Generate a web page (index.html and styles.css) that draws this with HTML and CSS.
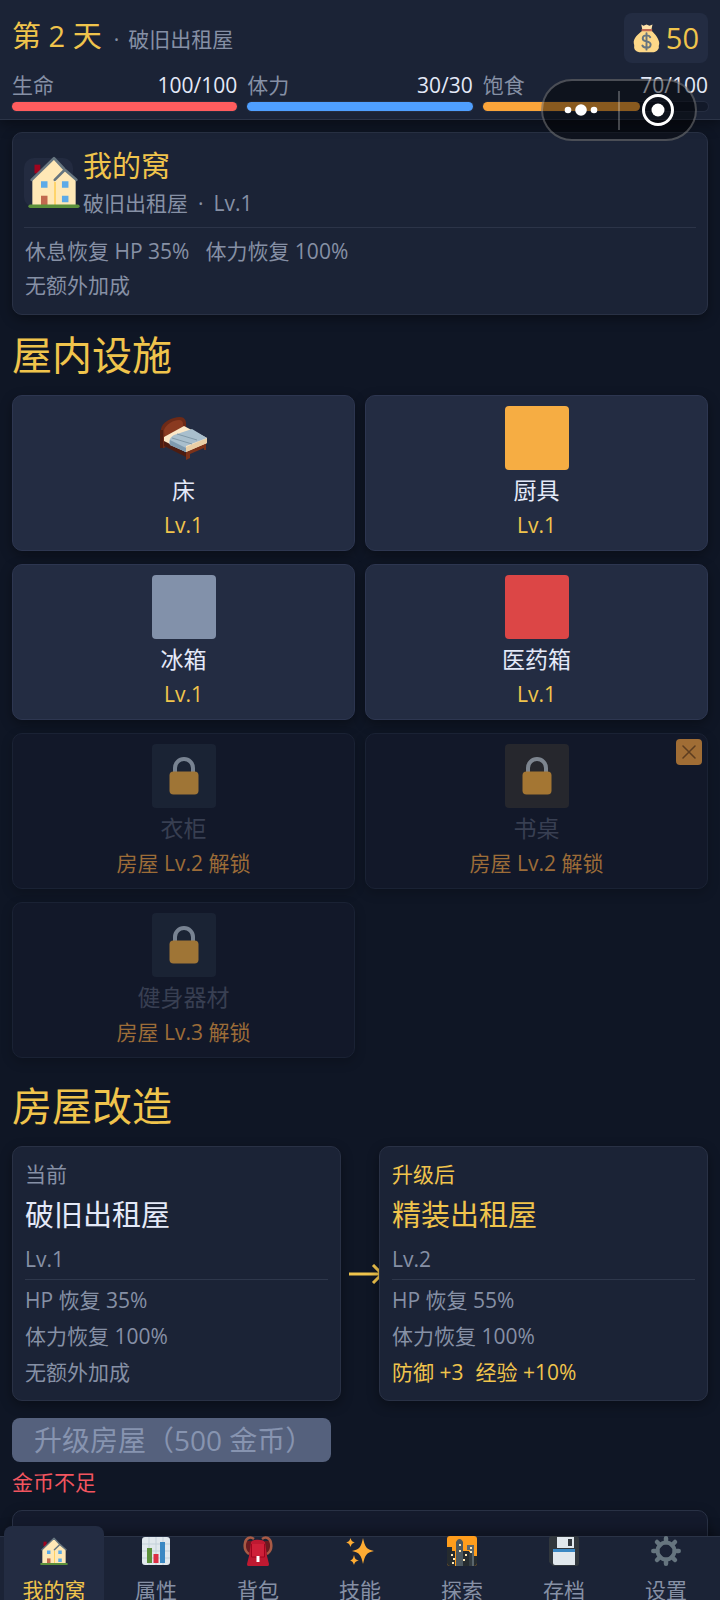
FILE: index.html
```html
<!DOCTYPE html>
<html lang="zh-CN">
  <head>
    <meta charset="UTF-8" />
    <meta name="viewport" content="width=device-width, initial-scale=1.0" />
    <title>我的窝</title>
    <link rel="stylesheet" href="styles.css">
  </head>
  <body>
    <!-- Shared icons -->
    <svg class="icon-defs" width="0" height="0" aria-hidden="true">
      <symbol id="icon-house" viewBox="0 0 36 36">
        <path fill="#a0041e" d="M4.5 6h4v6h-4z"/>
        <path fill="#ffe8b6" d="M3 16 18 1.500 25 9l8 7.500V35H3z"/>
        <path fill="#ffcc4d" d="M18.200 18h1v17h-1z"/>
        <path fill="none" stroke="#66757f" stroke-width="1.800" stroke-linecap="round" stroke-linejoin="round" d="M2.500 16.500 18 1.500l7 7.500M18.500 16.500 25.500 9.500 33.500 16.500"/>
        <path fill="#5caae8" d="M9 17.500h4.500V22H9zM23.500 17.500H28V22h-4.500zM23.500 27.500H28V32h-4.500z"/>
        <path fill="#c1694f" d="M9 27.500h4.500V35H9z"/>
        <path fill="#5c913b" d="M1.500 33.500h33a1.200 1.200 0 0 1 0 2.500h-33a1.200 1.200 0 0 1 0-2.500z"/>
      </symbol>
      <symbol id="icon-lock" viewBox="0 0 30 38">
        <path fill="none" stroke="#bdc9d6" stroke-width="4" d="M6 17v-6a9 9 0 0 1 18 0v6"/>
        <rect x="0.500" y="14.500" width="29" height="23" rx="4" fill="#ffb038"/>
      </symbol>
    </svg>

    <div class="app">
      <header class="topbar">
        <div class="topbar-row">
          <div class="day">
            <span>第 2 天</span>
            <span class="day-place"><span>·</span><span>破旧出租屋</span></span>
          </div>
          <div class="coins">
            <svg class="coins-icon" viewBox="0 0 36 40" aria-hidden="true">
              <path fill="#ffe2a8" d="m11 2 3 1.500L18 2l4 1.500L26 2l-1.500 7h-12z"/>
              <path fill="#fdd888" d="M13 10h11c6 4.500 11 12 11 17 0 2-1 3-.5 5.500C34 36 30 39 26 39H10c-5 0-8-3-8.500-6C1.500 31 2 30 1 27 0 21 7 14 13 10z"/>
              <path fill="#bf6952" d="M11.500 8h14v3h-14z"/>
              <path fill="none" stroke="#67757f" stroke-width="2.600" stroke-linecap="round" d="M23 19c-1-2-3-2.500-5-2.500-3 0-5 1.500-5 4s2.500 3.500 5 4 5.500 1.500 5.500 4.200-2.500 4.300-5.500 4.300c-2.500 0-4.500-1-5.500-3M18 13.500v22"/>
            </svg>
            <span>50</span>
          </div>
        </div>
        <div class="stats">
          <div class="stat">
            <div class="stat-head"><span>生命</span><span class="stat-value">100/100</span></div>
            <div class="bar"><div class="bar-fill hp" style="width: 100%"></div></div>
          </div>
          <div class="stat">
            <div class="stat-head"><span>体力</span><span class="stat-value">30/30</span></div>
            <div class="bar"><div class="bar-fill stamina" style="width: 100%"></div></div>
          </div>
          <div class="stat">
            <div class="stat-head"><span>饱食</span><span class="stat-value">70/100</span></div>
            <div class="bar"><div class="bar-fill food" style="width: 70%"></div></div>
          </div>
        </div>
      </header>

      <!-- Floating host menu -->
      <div class="capsule">
        <button class="capsule-button" aria-label="更多">
          <svg width="34" height="14" viewBox="0 0 34 14"><g fill="#fff"><circle cx="4" cy="7" r="3.300"/><circle cx="17" cy="7" r="5.800"/><circle cx="30" cy="7" r="3.300"/></g></svg>
        </button>
        <button class="capsule-button" aria-label="关闭">
          <svg width="34" height="34" viewBox="0 0 34 34"><circle cx="17" cy="17" r="14.500" fill="none" stroke="#fff" stroke-width="3"/><circle cx="17" cy="17" r="6.500" fill="#fff"/></svg>
        </button>
      </div>

      <main class="content">
        <section class="card home-card">
          <div class="home-head">
            <div class="home-icon"><svg width="52" height="52" aria-hidden="true"><use href="#icon-house"/></svg></div>
            <div>
              <div class="home-title">我的窝</div>
              <div class="home-sub"><span>破旧出租屋</span><span>·</span><span>Lv.1</span></div>
            </div>
          </div>
          <div class="home-info">
            <div class="info-row"><span>休息恢复 HP 35%</span><span>体力恢复 100%</span></div>
            <div>无额外加成</div>
          </div>
        </section>

        <h2>屋内设施</h2>
        <div class="facility-grid">
          <button class="facility">
            <span class="facility-icon">
              <svg width="48" height="44" viewBox="0 0 48 44" aria-hidden="true">
                <path fill="#6d2a17" d="M1 13C2 6 12 1 20 1c4 0 6 3 6 6v12L4 32H1z"/>
                <path fill="#8a3a20" d="M4 14C6 8 14 4 19 4c3 0 4 2 4 4v9L5 24z"/>
                <path fill="#4d1c10" d="M0 14h3v18H0zM4 24l22 13v4l-22-11z"/>
                <path fill="#7c3219" d="m26 36 20-10v8h-2v-2l-14 6v4l-4 2z"/>
                <path fill="#fbe8c8" d="m4 21 20-11 23 12v5L26 36 4 25z"/>
                <path fill="#e9cfa6" d="m26 31 21-9v5L26 36z"/>
                <path fill="#a9bfcd" d="M14 19 32 13l15 9-21 8v6L10 29c-2-3 0-8 4-10z"/>
                <path fill="#7f9aae" d="m10 24 16 8v4L10 29z"/>
                <path fill="none" stroke="#8199a8" d="m12 22 20 6M17 18l20 6"/>
              </svg>
            </span>
            <span class="facility-name">床</span>
            <span class="facility-level">Lv.1</span>
          </button>
          <button class="facility">
            <span class="facility-icon kitchen"></span>
            <span class="facility-name">厨具</span>
            <span class="facility-level">Lv.1</span>
          </button>
          <button class="facility">
            <span class="facility-icon fridge"></span>
            <span class="facility-name">冰箱</span>
            <span class="facility-level">Lv.1</span>
          </button>
          <button class="facility">
            <span class="facility-icon medkit"></span>
            <span class="facility-name">医药箱</span>
            <span class="facility-level">Lv.1</span>
          </button>
          <button class="facility locked">
            <span class="facility-icon wardrobe"><svg width="30" height="38" aria-hidden="true"><use href="#icon-lock"/></svg></span>
            <span class="facility-name">衣柜</span>
            <span class="facility-level">房屋 Lv.2 解锁</span>
          </button>
          <button class="facility locked">
            <span class="facility-badge">
              <svg width="14" height="14" viewBox="0 0 14 14" aria-hidden="true"><path d="m1 1 12 12M13 1 1 13" stroke="#5d3d20" stroke-width="1.500" stroke-linecap="round"/></svg>
            </span>
            <span class="facility-icon desk"><svg width="30" height="38" aria-hidden="true"><use href="#icon-lock"/></svg></span>
            <span class="facility-name">书桌</span>
            <span class="facility-level">房屋 Lv.2 解锁</span>
          </button>
          <button class="facility locked">
            <span class="facility-icon wardrobe"><svg width="30" height="38" aria-hidden="true"><use href="#icon-lock"/></svg></span>
            <span class="facility-name">健身器材</span>
            <span class="facility-level">房屋 Lv.3 解锁</span>
          </button>
        </div>

        <h2>房屋改造</h2>
        <div class="upgrade">
          <div class="card upgrade-card">
            <div class="upgrade-label">当前</div>
            <div class="upgrade-name">破旧出租屋</div>
            <div class="upgrade-level">Lv.1</div>
            <div class="upgrade-info">HP 恢复 35%</div>
            <div class="upgrade-info">体力恢复 100%</div>
            <div class="upgrade-info">无额外加成</div>
          </div>
          <div class="upgrade-arrow">
            <svg width="36" height="20" viewBox="0 0 36 20" aria-hidden="true"><path d="M0 10h32M24 1l9 9-9 9" fill="none" stroke="#f0c44c" stroke-width="3"/></svg>
          </div>
          <div class="card upgrade-card next">
            <div class="upgrade-label">升级后</div>
            <div class="upgrade-name">精装出租屋</div>
            <div class="upgrade-level">Lv.2</div>
            <div class="upgrade-info">HP 恢复 55%</div>
            <div class="upgrade-info">体力恢复 100%</div>
            <div class="upgrade-info bonus"><span>防御 +3</span><span>经验 +10%</span></div>
          </div>
        </div>
        <button class="upgrade-button" disabled>升级房屋（500 金币）</button>
        <p class="error">金币不足</p>
        <section class="card log-card"></section>
      </main>

      <nav class="tabs">
        <button class="tab active">
          <svg width="28" height="28" aria-hidden="true"><use href="#icon-house"/></svg>
          <span>我的窝</span>
        </button>
        <button class="tab">
          <svg width="28" height="28" viewBox="0 0 28 28" aria-hidden="true">
            <rect width="28" height="28" rx="3" fill="#e1e8ed"/>
            <path stroke="#c3d0d9" fill="none" d="M0 7h28M0 14h28M0 21h28M7 0v28M14 0v28M21 0v28"/>
            <path fill="#5c913b" d="M5 11h5v15H5z"/><path fill="#dd2e44" d="M11.500 17h5v9h-5z"/><path fill="#3b88c3" d="M18 5h5v21h-5z"/>
          </svg>
          <span>属性</span>
        </button>
        <button class="tab">
          <svg width="30" height="30" viewBox="0 0 30 30" aria-hidden="true">
            <path fill="#6b1a20" d="M2 5h6v14H5C2 15 1 10 2 5zM22 5h6c1 5 0 10-3 14h-3z"/>
            <path fill="none" stroke="#a85a45" stroke-width="2.500" d="M11 3C7 0 3 2 2 7c-1 5 1 9 4 11M19 3c4-3 8-1 9 4 1 5-1 9-4 11"/>
            <path fill="#be1931" d="M8 6c2-3 12-3 14 0l2 14 2 8c0 2-1 2-2 2H6c-1 0-2 0-2-2l2-8z"/>
            <path fill="#cf2039" d="M9 8h12v13H9z"/><path fill="none" stroke="#a0041e" d="M8.500 8v13h13V8"/>
            <path fill="#fff" d="M13.500 20h3v6h-3z"/>
          </svg>
          <span>背包</span>
        </button>
        <button class="tab">
          <svg width="28" height="28" viewBox="0 0 28 28" aria-hidden="true">
            <path fill="#ffac33" d="M17 1c2 9 3 11 11 13-8 2-9 4-11 13-2-9-3-11-11-13 8-2 9-4 11-13zM4.500 1C5.500 4 6 4.500 9 5.500 6 6.500 5.500 7 4.500 10 3.500 7 3 6.500 0 5.500 3 4.500 3.500 4 4.500 1zM8 18c1 4 1.500 4.500 5 5.500-3.500 1-4 1.500-5 4.500-1-3-1.500-3.500-4-4.500 2.500-1 3-1.500 4-5.500z"/>
          </svg>
          <span>技能</span>
        </button>
        <button class="tab">
          <svg width="30" height="30" viewBox="0 0 30 30" aria-hidden="true">
            <rect width="30" height="30" rx="3" fill="#ff9d1c"/>
            <path fill="#252b2f" d="M0 11h5v4h3v15H3a3 3 0 0 1-3-3zM15 15h7v15h-7zM26 20h4v7a3 3 0 0 1-3 3z"/>
            <path fill="#4c585f" d="M9 6c1-2 2-3 3.500-3S15 4 16 6v24H9z"/><path fill="#59656c" d="M20 9h7v21h-4V14h-3z"/>
            <path fill="#333c42" d="M22 16h3v14h-3z"/>
            <path fill="#ffe8b6" d="M4 18h2v2H4zM6 22h2v2H6zM5 26h2v2H5zM12 8h2v2h-2zM12 14h2v2h-2zM18 18h2v2h-2zM16 23h2v2h-2zM23 11h2v2h-2zM23 15h2v2h-2z"/>
          </svg>
          <span>探索</span>
        </button>
        <button class="tab">
          <svg width="30" height="30" viewBox="0 0 30 30" aria-hidden="true">
            <path fill="#31373d" d="M3 0h24a3 3 0 0 1 3 3v24a3 3 0 0 1-3 3H4l-4-4V3a3 3 0 0 1 3-3z"/>
            <path fill="#e1e8ed" d="M8 1h17v11H8z"/><path fill="#31373d" d="M19 3h4v7h-4z"/>
            <path fill="#e1e8ed" d="M4 13h22v16H6a2 2 0 0 1-2-2z"/><path fill="#3b88c3" d="M4 13h22v3H4z"/>
          </svg>
          <span>存档</span>
        </button>
        <button class="tab">
          <svg width="30" height="30" viewBox="0 0 30 30" aria-hidden="true">
            <g stroke="#66757f" stroke-width="4.500" stroke-linecap="round"><path d="M15 2.300v4M15 23.700v4M2.300 15h4M23.700 15h4M6 6l3 3M21 21l3 3M24 6l-3 3M9 21l-3 3"/></g>
            <circle cx="15" cy="15" r="8.500" fill="none" stroke="#66757f" stroke-width="4"/>
          </svg>
          <span>设置</span>
        </button>
      </nav>
    </div>
  </body>
</html>
```
FILE: styles.css
```css
* {
  box-sizing: border-box;
}
body {
  margin: 0;
  background-color: #0f1625;
  color: #e4e9f8;
  font-family: "Open Sans", "Noto Sans CJK SC", sans-serif;
  font-size: 21px;
  overflow: hidden;
}
button {
  font: inherit;
  color: inherit;
  border: none;
  background: none;
  padding: 0;
  cursor: pointer;
}
svg {
  display: block;
}
.icon-defs {
  position: absolute;
}
.app {
  position: relative;
  display: flex;
  flex-direction: column;
  height: 100vh;
}

/* Top bar */
.topbar {
  position: relative;
  z-index: 1;
  padding: 12px 12px 8px;
  background-color: #1b2336;
  border-bottom: 1px solid #2c3447;
  box-shadow: 0 4px 12px rgba(0, 0, 0, 0.4);
}
.topbar-row {
  display: flex;
  justify-content: space-between;
  align-items: center;
}
.day {
  display: flex;
  align-items: baseline;
  gap: 12px;
  color: #f0c44c;
  font-size: 29px;
  line-height: 48px;
}
.day-place {
  display: flex;
  gap: 9px;
  color: #8690a5;
  font-size: 21px;
}
.coins {
  display: flex;
  align-items: center;
  gap: 6px;
  height: 50px;
  padding: 0 9px;
  border-radius: 8px;
  background-color: #232c42;
  color: #f0c44c;
  font-size: 29px;
}
.coins-icon {
  width: 27px;
  height: 30px;
}
.stats {
  display: flex;
  gap: 10px;
  margin-top: 7px;
}
.stat {
  flex: 1;
}
.stat-head {
  display: flex;
  justify-content: space-between;
  margin-bottom: 2px;
  line-height: 30px;
  color: #8690a5;
}
.stat-value {
  color: #e4e9f8;
}
.bar {
  height: 9px;
  border-radius: 5px;
  background-color: #121929;
  box-shadow: 0 0 0 1px #252d40;
}
.bar-fill {
  height: 100%;
  border-radius: 5px;
}
.hp {
  background-color: #ff5c5e;
}
.stamina {
  background-color: #4f9fff;
}
.food {
  background-color: #faa43a;
}

/* Floating capsule */
.capsule {
  position: absolute;
  top: 79px;
  right: 23px;
  z-index: 10;
  display: flex;
  align-items: center;
  width: 156px;
  height: 62px;
  border: 2px solid rgba(255, 255, 255, 0.25);
  border-radius: 31px;
  background-color: rgba(0, 0, 0, 0.45);
}
.capsule-button {
  display: flex;
  flex: 1;
  justify-content: center;
  align-items: center;
  height: 39px;
}
.capsule-button + .capsule-button {
  border-left: 2px solid rgba(255, 255, 255, 0.25);
}

/* Content */
.content {
  flex: 1;
  min-height: 0;
  overflow: hidden;
  padding: 12px;
}
.card {
  padding: 12px;
  border: 1px solid #293145;
  border-radius: 10px;
  background-color: #1b2336;
  box-shadow: 0 4px 12px rgba(0, 0, 0, 0.35);
}
.home-card {
  padding: 12px 11px;
}
.home-head {
  display: flex;
  align-items: center;
  gap: 10px;
  padding-bottom: 8px;
  border-bottom: 1px solid #2c3448;
}
.home-icon {
  display: flex;
  align-items: center;
  width: 49px;
  height: 49px;
  border-radius: 10px;
  background-color: #232b40;
}
.home-icon svg {
  flex: none;
  margin-left: 4px;
}
.home-title {
  color: #f0c44c;
  font-size: 29px;
  line-height: 42px;
}
.home-sub {
  display: flex;
  gap: 10px;
  line-height: 32px;
  color: #8690a5;
}
.home-info {
  padding: 6px 1px 0;
  line-height: 34px;
  color: #8690a5;
}
.info-row {
  display: flex;
  gap: 16px;
}
h2 {
  margin: 12px 0;
  color: #f0c44c;
  font-size: 40px;
  font-weight: 400;
  line-height: 56px;
}
.facility-grid {
  display: grid;
  grid-template-columns: 1fr 1fr;
  gap: 13px 10px;
  margin-bottom: 20px;
}
.facility {
  position: relative;
  display: flex;
  flex-direction: column;
  align-items: center;
  padding: 10px 10px 9px;
  border: 1px solid #2d3650;
  border-radius: 10px;
  background-color: #232c42;
  box-shadow: 0 4px 12px rgba(0, 0, 0, 0.35);
}
.facility-icon {
  display: flex;
  justify-content: center;
  align-items: center;
  width: 64px;
  height: 64px;
  border-radius: 4px;
}
.kitchen {
  background-color: #f6ad43;
}
.fridge {
  background-color: #8291aa;
}
.medkit {
  background-color: #dc4646;
}
.facility-name {
  font-size: 23px;
  line-height: 40px;
}
.facility-level {
  line-height: 31px;
  color: #f0c44c;
}
.locked {
  border-color: #1a2234;
  background-color: #121829;
  box-shadow: 0 4px 12px rgba(0, 0, 0, 0.2);
}
.locked .facility-icon svg {
  opacity: 0.58;
}
.wardrobe {
  background-color: #1a2334;
}
.desk {
  background-color: #26272d;
}
.locked .facility-name {
  color: #383f52;
}
.locked .facility-level {
  color: #9c6c38;
}
.facility-badge {
  position: absolute;
  top: 5px;
  right: 5px;
  display: flex;
  justify-content: center;
  align-items: center;
  width: 26px;
  height: 26px;
  border-radius: 4px;
  background-color: #a06d35;
}

/* House upgrade */
.upgrade {
  display: flex;
  align-items: stretch;
}
.upgrade-card {
  flex: 1;
  padding: 10px 12px;
}
.upgrade-arrow {
  display: flex;
  align-items: center;
  width: 38px;
  padding-left: 8px;
}
.upgrade-arrow svg {
  flex: none;
}
.next {
  position: relative;
}
.upgrade-label {
  line-height: 34px;
  color: #8690a5;
}
.upgrade-name {
  font-size: 29px;
  line-height: 48px;
}
.upgrade-level {
  margin-bottom: 2px;
  line-height: 40px;
  border-bottom: 1px solid #2e374b;
  color: #8690a5;
}
.upgrade-info {
  line-height: 36px;
  color: #8690a5;
}
.next .upgrade-label,
.next .upgrade-name,
.bonus {
  color: #f0c44c;
}
.bonus {
  display: flex;
  gap: 12px;
}
.upgrade-button {
  height: 44px;
  margin-top: 17px;
  padding: 0 18px 0 22px;
  border-radius: 8px;
  background-color: #55617d;
  color: #8794b0;
  font-size: 28px;
  line-height: 44px;
}
.error {
  margin: 4px 0 12px;
  line-height: 32px;
  color: #f2555f;
}
.log-card {
  height: 120px;
  background-color: #141a2c;
}

/* Bottom tabs */
.tabs {
  position: relative;
  z-index: 1;
  display: flex;
  flex: none;
  align-items: center;
  gap: 2px;
  height: 64px;
  padding: 0 4px;
  border-top: 1px solid #2a3346;
  background-color: #1b2336;
  box-shadow: 0 -4px 12px rgba(0, 0, 0, 0.35);
}
.tab {
  display: flex;
  flex: 1;
  flex-direction: column;
  justify-content: center;
  align-items: center;
  gap: 8px;
  height: 86px;
  padding-top: 4px;
  border-radius: 8px;
  color: #8690a5;
}
.tab svg {
  height: 30px;
}
.tab span {
  line-height: 32px;
}
.tab.active {
  background-color: #232c42;
  color: #f0c44c;
}
```
